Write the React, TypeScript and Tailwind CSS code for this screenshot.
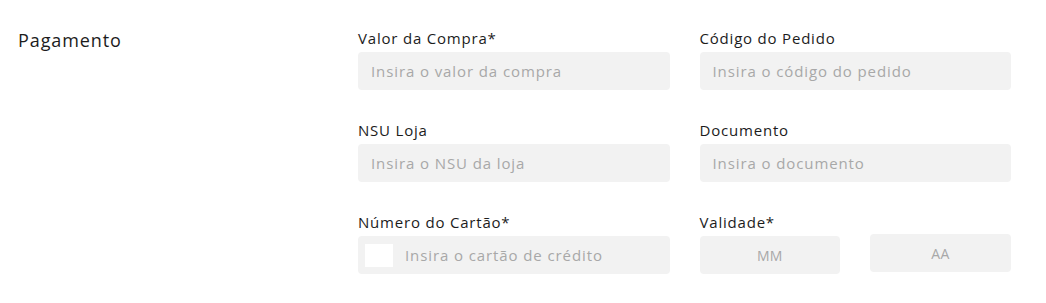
export default function App() {
  const font = { fontFamily: '"Open Sans", "Liberation Sans", sans-serif' }
  return (
    <div className="w-[1046px] h-[303px] bg-white text-[#1c1c1c]" style={font}>
      <div className="flex pl-[18px] pt-[28px]">
        <div className="w-[340px]">
          <h2 className="text-[18px] leading-[25px] font-normal tracking-[0.9px]">Pagamento</h2>
        </div>
        <div className="grid grid-cols-2 w-[653px] gap-x-[30px] gap-y-[30px]">
          <Field label="Valor da Compra*" placeholder="Insira o valor da compra" />
          <Field label="Código do Pedido" placeholder="Insira o código do pedido" />
          <Field label="NSU Loja" placeholder="Insira o NSU da loja" />
          <Field label="Documento" placeholder="Insira o documento" />
          <div className="flex flex-col gap-[4px]">
            <label className="text-[15px] leading-[20px] tracking-[0.8px]">Número do Cartão*</label>
            <div className="h-[38px] rounded-[4px] bg-[#f2f2f2] flex items-center pl-[7px]">
              <div className="w-[28px] h-[23px] bg-white" />
              <span className="ml-[12px] text-[15px] tracking-[0.9px] text-[#a8a8a8]">Insira o cartão de crédito</span>
            </div>
          </div>
          <div className="flex flex-col gap-[4px]">
            <label className="text-[15px] leading-[20px] tracking-[0.8px]">Validade*</label>
            <div className="flex items-start gap-[30px]">
              <div className="flex-1 h-[38px] rounded-[4px] bg-[#f2f2f2] flex items-center justify-center text-[14px] tracking-[0.4px] text-[#a8a8a8]">MM</div>
              <div className="flex-1 h-[38px] -mt-[2px] rounded-[4px] bg-[#f2f2f2] flex items-center justify-center text-[14px] tracking-[0.4px] text-[#a8a8a8]">AA</div>
            </div>
          </div>
        </div>
      </div>
    </div>
  )
}

function Field({ label, placeholder }: { label: string; placeholder: string }) {
  return (
    <div className="flex flex-col gap-[4px]">
      <label className="text-[15px] leading-[20px] tracking-[0.8px]">{label}</label>
      <div className="h-[38px] rounded-[4px] bg-[#f2f2f2] flex items-center pl-[13px]">
        <span className="text-[15px] tracking-[0.9px] text-[#a8a8a8]">{placeholder}</span>
      </div>
    </div>
  )
}
